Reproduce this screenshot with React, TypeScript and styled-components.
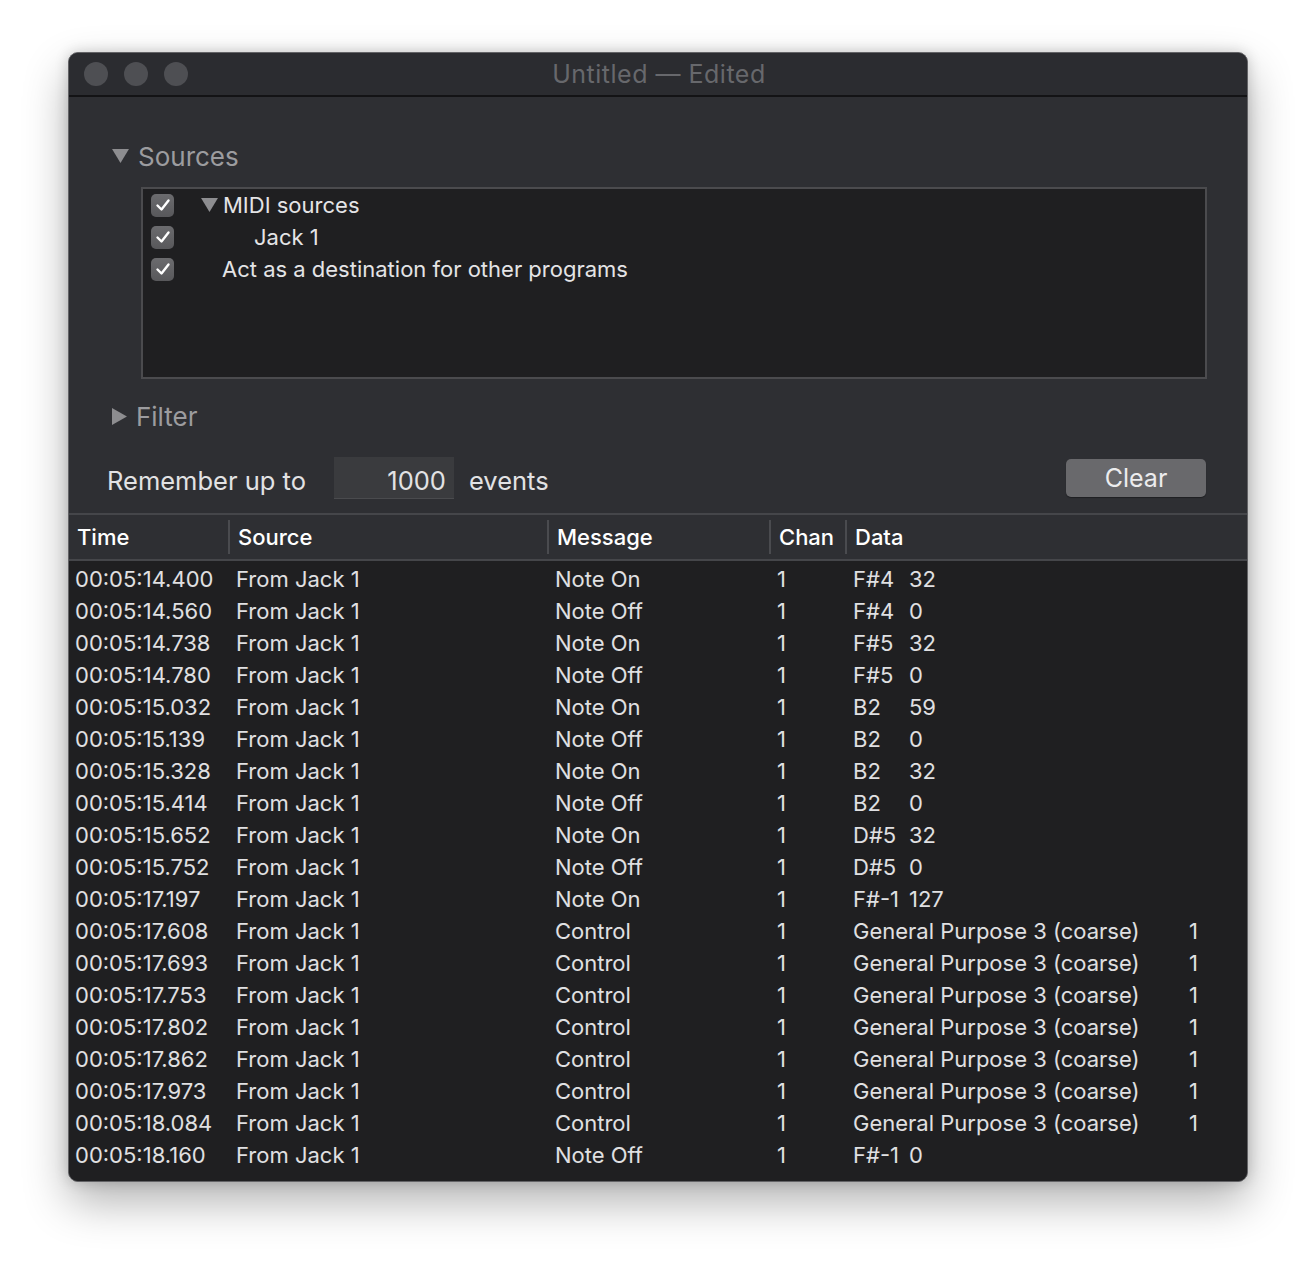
import styled, { createGlobalStyle } from 'styled-components';

const GlobalStyle = createGlobalStyle`
  html, body {
    margin: 0;
    padding: 0;
    background: #ffffff;
  }
  body {
    font-family: Inter, "Noto Sans", "Liberation Sans", sans-serif;
    -webkit-font-smoothing: antialiased;
  }
`;

const Page = styled.div`
  padding: 52px 0 0 68px;
  height: 1266px;
  box-sizing: border-box;
`;

const Window = styled.div`
  width: 1180px;
  height: 1130px;
  box-sizing: border-box;
  display: flex;
  flex-direction: column;
  background: #2e2f33;
  border: 1px solid #636366;
  border-radius: 10px;
  overflow: hidden;
  box-shadow: 0 20px 45px rgba(0, 0, 0, 0.3), 0 0 14px rgba(0, 0, 0, 0.18);
`;

const TitleBar = styled.div`
  position: relative;
  height: 42px;
  flex: none;
  display: flex;
  align-items: center;
  justify-content: center;
  background: #2b2c30;
  border-bottom: 2px solid #131315;
`;

const Lights = styled.div`
  position: absolute;
  left: 15px;
  top: 9px;
  display: flex;
  gap: 16px;
`;

const Light = styled.span`
  width: 24px;
  height: 24px;
  border-radius: 50%;
  background: #4e4f53;
`;

const Title = styled.div`
  font-size: 25px;
  color: #67686c;
  letter-spacing: 0.5px;
  padding-left: 2px;
`;

const Disclosure = styled.div<{ $top: number }>`
  display: flex;
  align-items: center;
  gap: 9px;
  height: 32px;
  margin: ${(p) => p.$top}px 0 0 43px;
  font-size: 26px;
  color: #9c9c9f;
`;

const SourceBox = styled.div`
  margin: 15px 40px 0 72px;
  height: 192px;
  box-sizing: border-box;
  background: #1f1f21;
  border: 2px solid #4b4b4e;
  padding: 0 0 0 8px;
`;

const SourceRow = styled.div`
  display: flex;
  align-items: center;
  height: 32px;
  font-size: 22px;
  color: #e4e4e6;
`;

const CheckBox = styled.span`
  width: 23px;
  height: 23px;
  flex: none;
  border-radius: 5px;
  background: linear-gradient(#6b6b6e, #58585b);
  display: flex;
  align-items: center;
  justify-content: center;
  margin-right: 27px;
`;

const SourceLabel = styled.span<{ $indent: number }>`
  display: flex;
  align-items: center;
  gap: 5px;
  padding-left: ${(p) => p.$indent}px;
`;

const ControlRow = styled.div`
  display: flex;
  align-items: center;
  height: 42px;
  margin: 25px 41px 0 38px;
  font-size: 25.5px;
  color: #e2e2e4;
`;

const ControlLabel = styled.span`
  padding-top: 5px;
`;

const CountInput = styled.div`
  width: 120px;
  height: 42px;
  box-sizing: border-box;
  margin: 0 15px 0 28px;
  padding: 5px 8px 0 0;
  display: flex;
  align-items: center;
  justify-content: flex-end;
  background: #3a3b3e;
  border-bottom: 1px solid #4a4b4e;
`;

const ClearButton = styled.button`
  margin-left: auto;
  width: 140px;
  height: 38px;
  border: none;
  border-radius: 5px;
  background: #69696c;
  color: #ececee;
  font-family: inherit;
  font-size: 25px;
  padding: 0;
  box-shadow: 0 1px 1px rgba(0, 0, 0, 0.35);
`;

const Table = styled.div`
  margin-top: 14px;
  flex: 1;
  display: flex;
  flex-direction: column;
  border-top: 2px solid #45464a;
`;

const HeaderRow = styled.div`
  height: 44px;
  flex: none;
  display: grid;
  grid-template-columns: 161px 319px 222px 76px 1fr;
  align-items: center;
  border-bottom: 2px solid #45464a;
  font-size: 22px;
  font-weight: 500;
  color: #ffffff;
`;

const HeaderCell = styled.div<{ $divider: boolean }>`
  height: 34px;
  display: flex;
  align-items: center;
  padding-left: 8px;
  border-left: 2px solid ${(p) => (p.$divider ? '#4a4b4f' : 'transparent')};
  margin-left: -2px;
`;

const Body = styled.div`
  flex: 1;
  background: #1f1f21;
  padding-top: 2px;
`;

const Row = styled.div`
  height: 32px;
  display: grid;
  grid-template-columns: 161px 319px 222px 76px 1fr;
  align-items: center;
  font-size: 22px;
  color: #e0e0e2;
  white-space: nowrap;
`;

const Cell = styled.div`
  padding-left: 6px;
  display: flex;
`;

const DataLabel = styled.span<{ $wide: boolean }>`
  width: ${(p) => (p.$wide ? 336 : 56)}px;
  flex: none;
`;

const Triangle = ({ dir, size }: { dir: 'down' | 'right'; size: number }) =>
  dir === 'down' ? (
    <svg width={size} height={size * 0.82} viewBox="0 0 17 14">
      <path d="M0 0 H17 L8.5 14 Z" fill="#8d8d90" />
    </svg>
  ) : (
    <svg width={size * 0.88} height={size} viewBox="0 0 15 17">
      <path d="M0 0 L15 8.5 L0 17 Z" fill="#8d8d90" />
    </svg>
  );

const Check = () => (
  <svg width="18" height="18" viewBox="0 0 18 18">
    <path d="M3.5 9.5 L7.5 13.5 L14.5 4.5" fill="none" stroke="#ffffff" strokeWidth="2.4" strokeLinecap="round" strokeLinejoin="round" />
  </svg>
);

const events: [string, string, string, string][] = [
  ['00:05:14.400', 'Note On', 'F#4', '32'],
  ['00:05:14.560', 'Note Off', 'F#4', '0'],
  ['00:05:14.738', 'Note On', 'F#5', '32'],
  ['00:05:14.780', 'Note Off', 'F#5', '0'],
  ['00:05:15.032', 'Note On', 'B2', '59'],
  ['00:05:15.139', 'Note Off', 'B2', '0'],
  ['00:05:15.328', 'Note On', 'B2', '32'],
  ['00:05:15.414', 'Note Off', 'B2', '0'],
  ['00:05:15.652', 'Note On', 'D#5', '32'],
  ['00:05:15.752', 'Note Off', 'D#5', '0'],
  ['00:05:17.197', 'Note On', 'F#-1', '127'],
  ['00:05:17.608', 'Control', 'General Purpose 3 (coarse)', '1'],
  ['00:05:17.693', 'Control', 'General Purpose 3 (coarse)', '1'],
  ['00:05:17.753', 'Control', 'General Purpose 3 (coarse)', '1'],
  ['00:05:17.802', 'Control', 'General Purpose 3 (coarse)', '1'],
  ['00:05:17.862', 'Control', 'General Purpose 3 (coarse)', '1'],
  ['00:05:17.973', 'Control', 'General Purpose 3 (coarse)', '1'],
  ['00:05:18.084', 'Control', 'General Purpose 3 (coarse)', '1'],
  ['00:05:18.160', 'Note Off', 'F#-1', '0'],
];

const columns = ['Time', 'Source', 'Message', 'Chan', 'Data'];

export default function App() {
  return (
    <Page>
      <GlobalStyle />
      <Window>
        <TitleBar>
          <Lights>
            <Light />
            <Light />
            <Light />
          </Lights>
          <Title>Untitled — Edited</Title>
        </TitleBar>

        <Disclosure $top={43}>
          <Triangle dir="down" size={17} />
          Sources
        </Disclosure>
        <SourceBox>
          <SourceRow>
            <CheckBox>
              <Check />
            </CheckBox>
            <SourceLabel $indent={0}>
              <Triangle dir="down" size={17} />
              MIDI sources
            </SourceLabel>
          </SourceRow>
          <SourceRow>
            <CheckBox>
              <Check />
            </CheckBox>
            <SourceLabel $indent={53}>Jack 1</SourceLabel>
          </SourceRow>
          <SourceRow>
            <CheckBox>
              <Check />
            </CheckBox>
            <SourceLabel $indent={21}>Act as a destination for other programs</SourceLabel>
          </SourceRow>
        </SourceBox>

        <Disclosure $top={21}>
          <Triangle dir="right" size={17} />
          Filter
        </Disclosure>

        <ControlRow>
          <ControlLabel>Remember up to</ControlLabel>
          <CountInput>1000</CountInput>
          <ControlLabel>events</ControlLabel>
          <ClearButton>Clear</ClearButton>
        </ControlRow>

        <Table>
          <HeaderRow>
            {columns.map((c, i) => (
              <HeaderCell key={c} $divider={i > 0}>
                {c}
              </HeaderCell>
            ))}
          </HeaderRow>
          <Body>
            {events.map(([time, msg, label, value]) => (
              <Row key={time}>
                <Cell>{time}</Cell>
                <Cell>From Jack 1</Cell>
                <Cell>{msg}</Cell>
                <Cell>1</Cell>
                <Cell>
                  <DataLabel $wide={msg === 'Control'}>{label}</DataLabel>
                  {value}
                </Cell>
              </Row>
            ))}
          </Body>
        </Table>
      </Window>
    </Page>
  );
}
